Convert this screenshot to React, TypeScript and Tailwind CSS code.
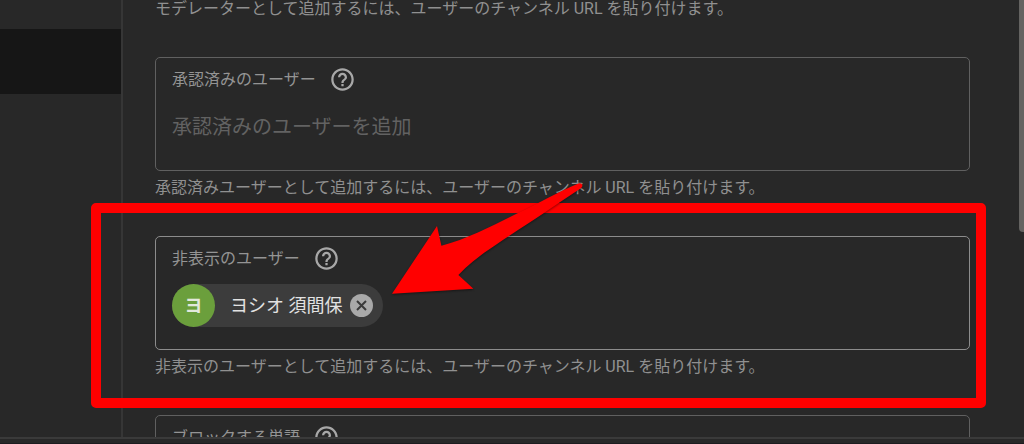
import { useId, type ReactNode } from 'react'
import clsx from 'clsx'
import { MdHelpOutline } from 'react-icons/md'

interface UserFieldProps {
  label: string
  placeholder?: string
  help: string
  active?: boolean
  chips?: ReactNode
  children?: ReactNode
}

function UserField({ label, placeholder, help, active, chips, children }: UserFieldProps) {
  const id = useId()

  return (
    <div className="relative">
      <div
        className={clsx(
          'rounded-[5px] border px-4 pt-2 pb-[22px]',
          active ? 'border-[#8c8c8c]' : 'border-[#606060]'
        )}
      >
        <div className="flex h-[27px] items-center gap-[13px]">
          <label htmlFor={id} className="text-base text-[#949494]">
            {label}
          </label>
          <button type="button" aria-label="ヘルプ" className="text-[#a8a8a8]">
            <MdHelpOutline size={27} />
          </button>
        </div>
        <div className="mt-3 flex h-[43px] items-center gap-3">
          {chips}
          <input
            id={id}
            type="text"
            placeholder={placeholder}
            className="h-full min-w-0 flex-1 bg-transparent text-xl text-[#e0e0e0] outline-none placeholder:text-[#626262]"
          />
        </div>
      </div>
      <p className="mt-2 text-base leading-[18px] text-[#909090]">{help}</p>
      {children}
    </div>
  )
}

function UserChip({ name, initial }: { name: string; initial: string }) {
  return (
    <div className="flex h-full shrink-0 items-center rounded-full bg-[#3c3c3c] pr-2">
      <span className="flex size-[43px] items-center justify-center rounded-full bg-[#6b9f3c] text-lg font-bold text-[#e2e8dc]">
        {initial}
      </span>
      <span className="pr-1.5 pl-[15px] text-lg text-[#e2e2e2]">{name}</span>
      <button type="button" aria-label="削除">
        <svg width="27" height="27" viewBox="0 0 27 27" fill="none">
          <circle cx="13.5" cy="13.5" r="11.5" fill="#a9a9a9" />
          <path d="M9 9l9 9M18 9l-9 9" stroke="#3a3a3a" strokeWidth="2" />
        </svg>
      </button>
    </div>
  )
}

function Highlight() {
  return (
    <>
      <div className="pointer-events-none absolute -top-[33px] -right-4 -bottom-8 -left-16 rounded-[5px] border-10 border-[#ff0000]" />
      <svg
        className="pointer-events-none absolute -top-[54px] left-[237px] overflow-visible drop-shadow-[0_1px_1px_rgba(0,0,0,0.45)]"
        width="191"
        height="112"
        viewBox="0 0 191 112"
      >
        <path
          d="M0 111.8 L45 44 L49.4 63.7 C75 57 100 44 125 31.5 C147 21 166 10 186.5 1.4 C190 0.2 192.2 4.2 188.5 6.4 C171 18 149 33 126 48 C102 64 82 76 66.4 93 L81.4 106.7 Z"
          fill="#ff0000"
        />
      </svg>
    </>
  )
}

export default function App() {
  return (
    <div className="flex h-screen flex-col overflow-hidden bg-[#282828] font-['Roboto','Noto_Sans_CJK_JP',sans-serif]">
      <div className="relative flex min-h-0 flex-1 overflow-hidden">
        <nav className="w-[123px] shrink-0 border-r-2 border-[#363636] pt-[29px]">
          <div className="h-[65px] bg-[#161616]" />
        </nav>
        <main className="flex min-w-0 flex-1 flex-col gap-[39px] pr-[54px] pl-8">
          <p className="text-base leading-[18px] text-[#909090]">
            モデレーターとして追加するには、ユーザーのチャンネル URL を貼り付けます。
          </p>
          <UserField
            label="承認済みのユーザー"
            placeholder="承認済みのユーザーを追加"
            help="承認済みユーザーとして追加するには、ユーザーのチャンネル URL を貼り付けます。"
          />
          <UserField
            label="非表示のユーザー"
            help="非表示のユーザーとして追加するには、ユーザーのチャンネル URL を貼り付けます。"
            active
            chips={<UserChip name="ヨシオ 須間保" initial="ヨ" />}
          >
            <Highlight />
          </UserField>
          <UserField label="ブロックする単語" help="" />
        </main>
        <div className="absolute top-0 right-0 h-[232px] w-[5px] rounded-bl bg-[#646361]" />
      </div>
      <footer className="h-[7px] shrink-0 border-t-2 border-b border-t-[#3a3a3a] border-b-[#1c1c1f]" />
    </div>
  )
}
